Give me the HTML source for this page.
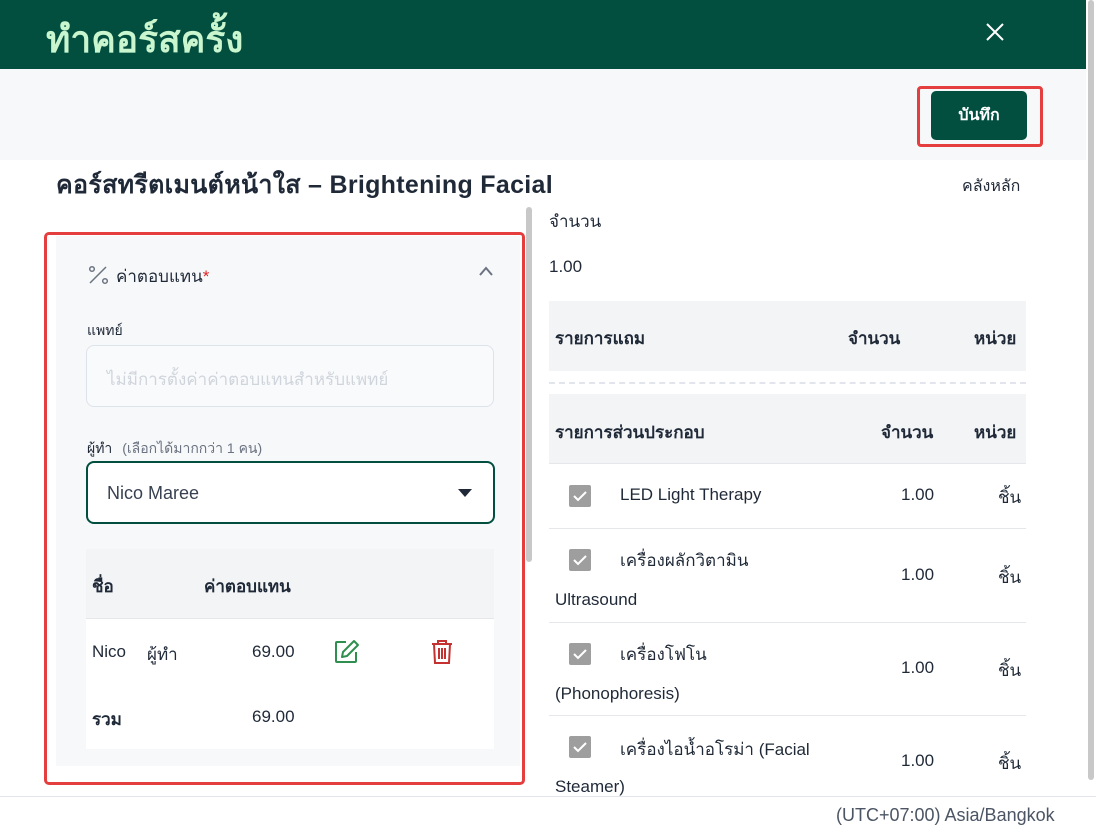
<!DOCTYPE html>
<html><head><meta charset="utf-8"><style>
*{box-sizing:border-box;margin:0;padding:0}
body{width:1096px;height:823px;overflow:hidden;background:#fff;font-family:"Liberation Sans","Noto Sans CJK SC",sans-serif;color:#1f2937;position:relative}
.a{position:absolute}
.t{font-size:17px;white-space:nowrap}
</style></head><body>
<div class="a" style="left:0;top:0;width:1086px;height:69px;background:#024f40"></div>
<div class="a" style="left:1086px;top:0;width:10px;height:823px;background:#fff"></div>
<div class="a" style="left:1088px;top:0;width:6px;height:780px;background:#c8c8c8;border-radius:3px"></div>
<div class="a t" style="left:46px;top:10px;font-size:37px;font-weight:bold;color:#c9f5cf">ทำคอร์สครั้ง</div>
<svg class="a" style="left:985px;top:22px" width="20" height="20"><path d="M2 2L18 18M18 2L2 18" stroke="#fff" stroke-width="2"/></svg>
<div class="a" style="left:0;top:69px;width:1086px;height:91px;background:#f7f8fa"></div>
<div class="a" style="left:917px;top:86px;width:126px;height:61px;border:3px solid #e53e3e;border-radius:4px"></div>
<div class="a" style="left:931px;top:91px;width:96px;height:49px;background:#024f40;border-radius:5px;color:#fff;font-weight:bold;font-size:16px;text-align:center;line-height:49px">บันทึก</div>
<div class="a t" style="left:56px;top:165px;font-size:25px;font-weight:bold;color:#1f2937;letter-spacing:0.3px">คอร์สทรีตเมนต์หน้าใส – Brightening Facial</div>
<div class="a t" style="left:962px;top:174px;font-size:16px">คลังหลัก</div>
<div class="a" style="left:526px;top:207px;width:6px;height:355px;background:#c8c8c8;border-radius:3px"></div>
<div class="a" style="left:44px;top:232px;width:481px;height:553px;border:3px solid #e53e3e;border-radius:5px;background:#fff"></div>
<div class="a" style="left:56px;top:236px;width:464px;height:530px;background:#f7f8fa"></div>
<svg class="a" style="left:88px;top:265px" width="22" height="20"><circle cx="4" cy="4" r="2.3" stroke="#6b7280" stroke-width="1.5" fill="none"/><circle cx="17" cy="16" r="2.3" stroke="#6b7280" stroke-width="1.5" fill="none"/><path d="M18 2L2 18" stroke="#6b7280" stroke-width="1.5"/></svg>
<div class="a t" style="left:116px;top:263px;font-size:17px;color:#1f2937">ค่าตอบแทน<span style="color:#dc2626">*</span></div>
<svg class="a" style="left:478px;top:265px" width="16" height="12"><path d="M2 10L8 3L14 10" stroke="#6b7280" stroke-width="2" fill="none"/></svg>
<div class="a t" style="left:87px;top:320px;font-size:14px">แพทย์</div>
<div class="a" style="left:86px;top:345px;width:408px;height:62px;border:1px solid #dde3ea;border-radius:8px;background:#f9fafc"></div>
<div class="a t" style="left:107px;top:366px;font-size:17px;color:#d0d5dc">ไม่มีการตั้งค่าค่าตอบแทนสำหรับแพทย์</div>
<div class="a t" style="left:87px;top:438px;font-size:14px">ผู้ทำ <span style="color:#6b7280;margin-left:6px">(เลือกได้มากกว่า 1 คน)</span></div>
<div class="a" style="left:86px;top:461px;width:409px;height:63px;border:2px solid #024f40;border-radius:8px;background:#fff"></div>
<div class="a t" style="left:107px;top:483px;font-size:18px;color:#374151">Nico Maree</div>
<svg class="a" style="left:458px;top:489px" width="14" height="8"><path d="M0 0H14L7 8Z" fill="#1f2937"/></svg>
<div class="a" style="left:86px;top:549px;width:408px;height:200px;background:#fff"></div>
<div class="a" style="left:86px;top:549px;width:408px;height:70px;background:#f3f4f6;border-bottom:1px solid #e5e7eb"></div>
<div class="a t" style="left:92px;top:573px;font-weight:bold;font-size:17px">ชื่อ</div>
<div class="a t" style="left:204px;top:573px;font-weight:bold;font-size:17px">ค่าตอบแทน</div>
<div class="a t" style="left:92px;top:642px">Nico</div>
<div class="a t" style="left:147px;top:641px;font-size:17px">ผู้ทำ</div>
<div class="a t" style="left:252px;top:642px">69.00</div>
<svg class="a" style="left:333px;top:638px" width="28" height="28"><path d="M13 4H4a1 1 0 0 0-1 1v18a1 1 0 0 0 1 1h18a1 1 0 0 0 1-1v-9" stroke="#2f8f4e" stroke-width="2" fill="none"/><path d="M21 3l4 4-11 11-5 1 1-5z" stroke="#2f8f4e" stroke-width="2" fill="none" stroke-linejoin="round"/></svg>
<svg class="a" style="left:430px;top:638px" width="24" height="28"><path d="M2 6H22M8 6V3h8v3M4 6l1 19h14l1-19M9 10v11M12 10v11M15 10v11" stroke="#c53030" stroke-width="2" fill="none"/></svg>
<div class="a t" style="left:92px;top:706px;font-weight:bold;font-size:17px">รวม</div>
<div class="a t" style="left:252px;top:707px">69.00</div>
<div class="a t" style="left:549px;top:208px;font-size:17px">จำนวน</div>
<div class="a t" style="left:549px;top:257px">1.00</div>
<div class="a" style="left:549px;top:301px;width:477px;height:70px;background:#f3f4f6"></div>
<div class="a t" style="left:555px;top:325px;font-weight:bold;font-size:17px">รายการแถม</div>
<div class="a t" style="left:848px;top:325px;font-weight:bold;font-size:17px">จำนวน</div>
<div class="a t" style="left:974px;top:325px;font-weight:bold;font-size:17px">หน่วย</div>
<div class="a" style="left:549px;top:382px;width:477px;border-top:2px dashed #e2e6ec"></div>
<div class="a" style="left:549px;top:394px;width:477px;height:70px;background:#f3f4f6;border-bottom:1px solid #e5e7eb"></div>
<div class="a t" style="left:555px;top:419px;font-weight:bold;font-size:17px">รายการส่วนประกอบ</div>
<div class="a t" style="left:881px;top:419px;font-weight:bold;font-size:17px">จำนวน</div>
<div class="a t" style="left:974px;top:419px;font-weight:bold;font-size:17px">หน่วย</div>
<div class="a" style="left:549px;top:528px;width:477px;border-top:1px solid #e5e7eb"></div>
<div class="a" style="left:549px;top:622px;width:477px;border-top:1px solid #e5e7eb"></div>
<div class="a" style="left:549px;top:715px;width:477px;border-top:1px solid #e5e7eb"></div>
<svg width="0" height="0"><defs><symbol id="cb" viewBox="0 0 22 22"><rect width="22" height="22" rx="2" fill="#9e9e9e"/><path d="M5 11l4 4 8-8" stroke="#fff" stroke-width="2" fill="none"/></symbol></defs></svg>
<svg class="a" style="left:569px;top:485px" width="22" height="22"><use href="#cb"/></svg>
<svg class="a" style="left:569px;top:549px" width="22" height="22"><use href="#cb"/></svg>
<svg class="a" style="left:569px;top:643px" width="22" height="22"><use href="#cb"/></svg>
<svg class="a" style="left:569px;top:736px" width="22" height="22"><use href="#cb"/></svg>
<div class="a t" style="left:620px;top:485px">LED Light Therapy</div>
<div class="a t" style="left:620px;top:547px;font-size:17px">เครื่องผลักวิตามิน</div>
<div class="a t" style="left:555px;top:590px">Ultrasound</div>
<div class="a t" style="left:620px;top:641px;font-size:17px">เครื่องโฟโน</div>
<div class="a t" style="left:555px;top:684px">(Phonophoresis)</div>
<div class="a t" style="left:620px;top:736px">เครื่องไอน้ำอโรม่า (Facial</div>
<div class="a t" style="left:555px;top:777px">Steamer)</div>
<div class="a t" style="left:901px;top:485px">1.00</div><div class="a t" style="left:998px;top:484px;font-size:17px">ชิ้น</div>
<div class="a t" style="left:901px;top:565px">1.00</div><div class="a t" style="left:998px;top:564px;font-size:17px">ชิ้น</div>
<div class="a t" style="left:901px;top:658px">1.00</div><div class="a t" style="left:998px;top:657px;font-size:17px">ชิ้น</div>
<div class="a t" style="left:901px;top:751px">1.00</div><div class="a t" style="left:998px;top:750px;font-size:17px">ชิ้น</div>
<div class="a" style="left:0;top:796px;width:1096px;height:27px;background:#fff;border-top:1px solid #e2e6ec"></div>
<div class="a t" style="left:836px;top:805px;color:#4b5563;font-size:18px">(UTC+07:00) Asia/Bangkok</div>
</body></html>
